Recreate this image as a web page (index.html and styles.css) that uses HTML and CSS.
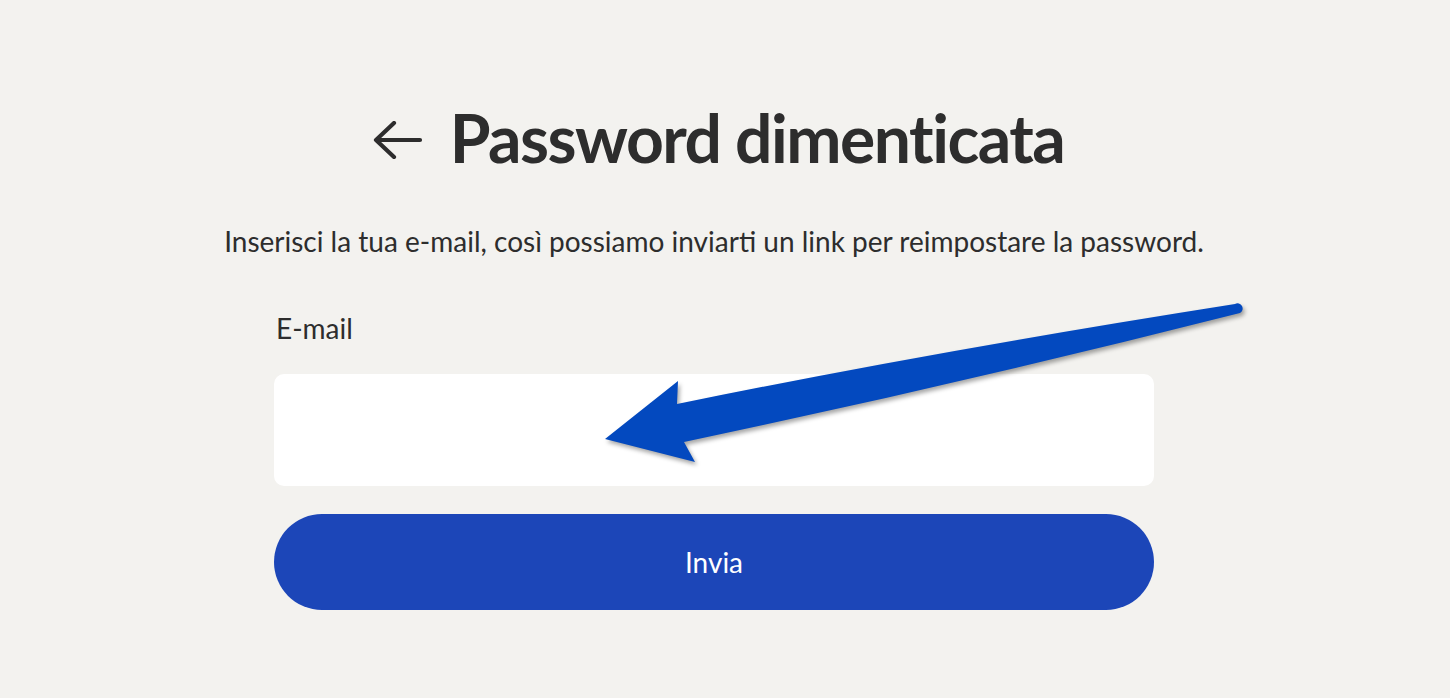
FILE: index.html
```html
<!DOCTYPE html>
<html lang="it">
<head>
    <meta charset="UTF-8">
    <meta name="viewport" content="width=device-width, initial-scale=1.0">
    <title>Password dimenticata</title>
    <link rel="stylesheet" href="styles.css">
</head>
<body>

    <main class="page">
        <h1 class="title">
            <a href="#" class="back" aria-label="Indietro">
                <svg width="50" height="38" viewBox="0 0 50 38">
                    <path d="M3 19 H47 M21 2 L3 19 L21 36" fill="none" stroke="#2d2d2d" stroke-width="4.2" stroke-linecap="round" stroke-linejoin="round"/>
                </svg>
            </a>
            <span>Password dimenticata</span>
        </h1>

        <p class="lead">Inserisci la tua e-mail, così possiamo inviarti un link per reimpostare la password.</p>

        <!-- Forma per il reset -->
        <form class="reset-form">
            <label for="email">E-mail</label>
            <input type="email" id="email">
            <button type="submit">Invia</button>
        </form>
    </main>

    <!-- Freccia di annotazione -->
    <svg class="annotation" width="1450" height="698" viewBox="0 0 1450 698">
        <path d="M605 439 L678 381 L677 404 Q930 352 1235 304 A4.6 4.6 0 0 1 1240 313 Q960 384 684 442 L695 462 Z" fill="#0349bf"/>
    </svg>

</body>
</html>
```

FILE: styles.css
```css
/* Pagina */
body {
    margin: 0;
    background-color: #f3f2ef;
    color: #2d2d2d;
    font-family: Lato, "Open Sans", sans-serif;
}

.page {
    display: flex;
    flex-direction: column;
    align-items: center;
    padding: 100px 22px 0 0;
}

/* Titolo */
.title {
    display: flex;
    align-items: center;
    gap: 27px;
    margin: 0 0 0 9px;
    font-size: 66px;
    font-weight: 700;
    line-height: 76px;
    letter-spacing: -1.5px;
}

.back {
    display: flex;
    margin-top: 4px;
}

.lead {
    margin: 48px 0 0;
    font-size: 28px;
    line-height: 34px;
}

/* Forma */
.reset-form {
    width: 880px;
    display: flex;
    flex-direction: column;
    margin-top: 53px;
}

label {
    font-size: 28px;
    line-height: 34px;
    padding-left: 2px;
}

input {
    height: 112px;
    margin-top: 29px;
    border: none;
    border-radius: 10px;
    background-color: white;
    font-size: 22px;
    padding: 0 24px;
}

button {
    height: 96px;
    margin-top: 28px;
    border: none;
    border-radius: 48px;
    background-color: #1c46b8;
    color: white;
    font-family: inherit;
    font-size: 28px;
    cursor: pointer;
}

/* Annotazione sopra il contenuto */
.annotation {
    position: absolute;
    top: 0;
    left: 0;
    pointer-events: none;
    filter: drop-shadow(2px 3px 2px rgba(0, 0, 0, 0.35));
}
```
